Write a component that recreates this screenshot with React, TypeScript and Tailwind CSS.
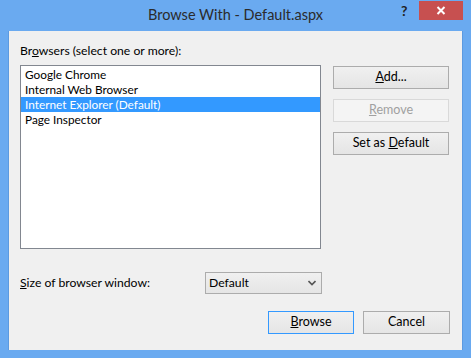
import React from 'react';

const font = { fontFamily: 'Lato, "Noto Sans", sans-serif' };

function Btn({ children, primary, disabled, className = '' }: { children: React.ReactNode; primary?: boolean; disabled?: boolean; className?: string }) {
  const border = disabled ? 'border-[#d9d9d9] text-[#a0a0a0] bg-[#f4f4f4]' : primary ? 'border-[#3399ff] text-black bg-gradient-to-b from-[#f0f0f0] to-[#e5e5e5]' : 'border-[#acacac] text-black bg-gradient-to-b from-[#f0f0f0] to-[#e5e5e5]';
  return (
    <div className={`h-[23px] border flex items-center justify-center text-[12.5px] leading-none ${border} ${className}`}>
      {children}
    </div>
  );
}

export default function App() {
  const items = ['Google Chrome', 'Internal Web Browser', 'Internet Explorer (Default)', 'Page Inspector'];
  return (
    <div className="w-[471px] h-[358px] bg-[#6aaaf0] flex flex-col overflow-hidden" style={font}>
      {/* title bar */}
      <div className="h-[31px] relative flex items-start">
        <div className="absolute inset-x-0 top-[5px] text-center text-[14.5px] text-[#2b2b2b] leading-[20px]">Browse With - Default.aspx</div>
        <div className="absolute left-[401px] top-[3px] text-[14px] font-bold text-[#222] leading-[16px]">?</div>
        <div className="absolute left-[419px] top-[1px] w-[44px] h-[19px] bg-[#c75050] flex items-center justify-center">
          <svg width="10" height="9" viewBox="0 0 10 9">
            <path d="M1.5 1 L8.5 8 M8.5 1 L1.5 8" stroke="#fff" strokeWidth="2" />
          </svg>
        </div>
      </div>

      {/* client area */}
      <div className="mx-[8px] h-[319px] bg-[#f0f0f0] border-l border-r border-[#5c9ae0] flex flex-col pl-[11px] text-[12.2px] text-black">
        <div className="mt-[12px] h-[16px] leading-[16px]">
          Br<span className="underline">o</span>wsers (select one or more):
        </div>
        <div className="mt-[6px] flex">
          <div className="w-[301px] h-[184px] bg-white border border-[#828790] flex flex-col pt-[1px] text-[11.8px]">
            {items.map((it, i) => (
              <div key={it} className={`h-[15px] leading-[15px] pl-[4px] ${i === 2 ? 'bg-[#3399ff] text-white' : 'text-black'}`}>
                {it}
              </div>
            ))}
          </div>
          <div className="ml-[12px] mt-[1px] flex flex-col gap-[10px] w-[116px]">
            <Btn><span><span className="underline">A</span>dd...</span></Btn>
            <Btn disabled><span><span className="underline">R</span>emove</span></Btn>
            <Btn><span>Set as <span className="underline">D</span>efault</span></Btn>
          </div>
        </div>
        <div className="mt-[23px] flex items-center">
          <div className="w-[185px]"><span className="underline">S</span>ize of browser window:</div>
          <div className="w-[117px] h-[22px] border border-[#acacac] bg-gradient-to-b from-[#f0f0f0] to-[#e5e5e5] flex items-center pl-[3px] pr-[5px]">
            <span className="flex-1">Default</span>
            <svg width="8" height="6" viewBox="0 0 8 6">
              <path d="M0.5 1 L4 4.5 L7.5 1" stroke="#555" strokeWidth="1.6" fill="none" />
            </svg>
          </div>
        </div>
        <div className="mt-[17px] flex justify-end gap-[9px] pr-[12px]">
          <Btn primary className="w-[86px]"><span><span className="underline">B</span>rowse</span></Btn>
          <Btn className="w-[87px]">Cancel</Btn>
        </div>
      </div>
    </div>
  );
}
